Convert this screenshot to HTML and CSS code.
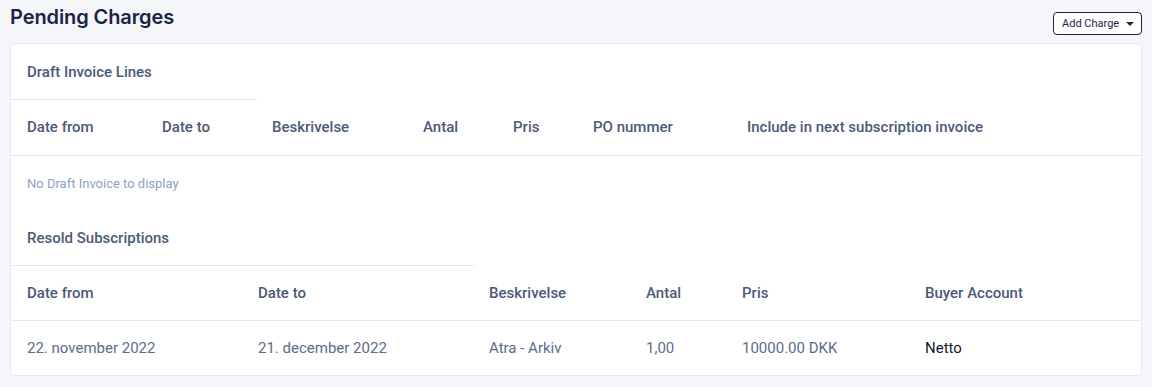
FILE: index.html
```html
<!DOCTYPE html>
<html>
<head>
<meta charset="utf-8">
<link rel="stylesheet" href="styles.css">
</head>
<body>
<div class="page">
  <div class="topbar">
    <h1 class="title">Pending Charges</h1>
    <button class="btn">Add Charge <span class="caret"></span></button>
  </div>
  <div class="card">
    <div class="section-title draft-title"><span>Draft Invoice Lines</span></div>
    <table class="tbl draft">
      <thead>
        <tr><th>Date from</th><th>Date to</th><th>Beskrivelse</th><th>Antal</th><th>Pris</th><th>PO nummer</th><th>Include in next subscription invoice</th></tr>
      </thead>
    </table>
    <div class="empty">No Draft Invoice to display</div>
    <div class="section-title resold-title"><span>Resold Subscriptions</span></div>
    <table class="tbl resold">
      <thead>
        <tr><th>Date from</th><th>Date to</th><th>Beskrivelse</th><th>Antal</th><th>Pris</th><th>Buyer Account</th></tr>
      </thead>
      <tbody>
        <tr><td>22. november 2022</td><td>21. december 2022</td><td>Atra - Arkiv</td><td>1,00</td><td>10000.00 DKK</td><td class="dark">Netto</td></tr>
      </tbody>
    </table>
  </div>
</div>
</body>
</html>
```
FILE: styles.css
```css
* { box-sizing: border-box; }
html, body { margin: 0; padding: 0; }
body {
  background: #f5f6fa;
  font-family: Roboto, "Liberation Sans", sans-serif;
  width: 1152px;
  height: 387px;
  overflow: hidden;
}
.page { padding: 0 10px; }
.topbar {
  display: flex;
  justify-content: space-between;
  align-items: flex-start;
  height: 43px;
}
.title {
  margin: 5px 0 0 0;
  font-family: Inter, "Noto Sans", sans-serif;
  font-size: 20px;
  font-weight: 600;
  color: #1b2444;
  line-height: 24px;
  letter-spacing: -0.1px;
}
.btn {
  margin-top: 12px;
  height: 23px;
  width: 89px;
  border: 1px solid #1b2444;
  border-radius: 4px;
  background: #fff;
  color: #1b2444;
  font-family: Roboto, sans-serif;
  font-size: 11px;
  padding: 0 0 0 8px;
  display: flex;
  align-items: center;
  gap: 7px;
}
.caret {
  width: 0; height: 0;
  border-left: 4px solid transparent;
  border-right: 4px solid transparent;
  border-top: 4px solid #1b2444;
}
.card {
  background: #fff;
  border: 1px solid #e2e7f0;
  border-radius: 4px;
  height: 333px;
  overflow: hidden;
}
.section-title {
  border-bottom: 1px solid #e2e7f0;
  display: flex;
  align-items: center;
  padding-left: 16px;
  font-size: 15px;
  font-weight: 500;
  color: #4b5a78;
}
.draft-title { width: 246px; height: 56px; }
.resold-title { width: 463px; height: 55px; }
.tbl {
  width: 100%;
  border-collapse: collapse;
  table-layout: fixed;
  font-size: 15px;
}
.tbl th, .tbl td {
  text-align: left;
  padding: 0 0 0 16px;
  height: 55px;
  border-bottom: 1px solid #e2e7f0;
  white-space: nowrap;
}
.tbl th { font-weight: 500; color: #4b5a78; }
.tbl td { font-weight: 400; color: #5a6c8e; }
.tbl tbody tr:last-child td { border-bottom: none; }
.tbl td.dark { color: #151a2e; }
.draft th:nth-child(1) { width: 135px; }
.draft th:nth-child(2) { width: 110px; }
.draft th:nth-child(3) { width: 151px; }
.draft th:nth-child(4) { width: 90px; }
.draft th:nth-child(5) { width: 80px; }
.draft th:nth-child(6) { width: 154px; }
.resold th:nth-child(1) { width: 231px; }
.resold th:nth-child(2) { width: 231px; }
.resold th:nth-child(3) { width: 157px; }
.resold th:nth-child(4) { width: 96px; }
.resold th:nth-child(5) { width: 183px; }
.empty {
  height: 55px;
  display: flex;
  align-items: center;
  padding-left: 16px;
  font-size: 13px;
  color: #8fa1c2;
}
```
